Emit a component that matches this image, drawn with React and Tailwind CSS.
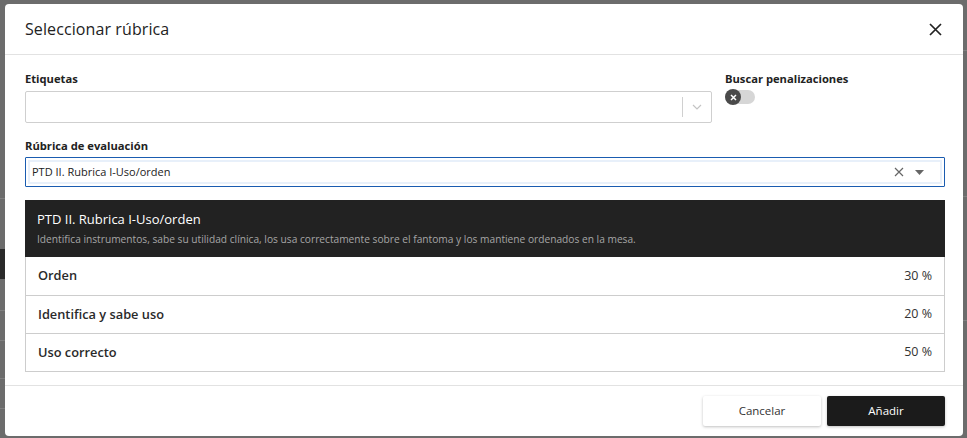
import React from "react";

export default function App() {
  const rows = [
    ["Orden", "30 %"],
    ["Identifica y sabe uso", "20 %"],
    ["Uso correcto", "50 %"],
  ];
  return (
    <div
      className="relative w-[967px] h-[438px] overflow-hidden bg-[#6c6c6c]"
      style={{ fontFamily: '"Open Sans", "Noto Sans", sans-serif' }}
    >
      {/* dimmed background fragments */}
      <div className="absolute left-0 top-[198px] w-[5px] h-px bg-[#808080]" />
      <div className="absolute left-0 top-[249px] w-[5px] h-[30px] bg-[#2a2a2a]" />
      <div className="absolute left-0 top-[310px] w-[5px] h-px bg-[#808080]" />
      <div className="absolute left-0 top-[340px] w-[5px] h-px bg-[#808080]" />
      <div className="absolute left-0 top-[378px] w-[5px] h-px bg-[#808080]" />
      <div className="absolute left-0 top-[408px] w-[5px] h-px bg-[#808080]" />
      <div className="absolute right-0 top-[50px] w-[4px] h-px bg-[#808080]" />
      <div className="absolute right-0 top-[196px] w-[4px] h-px bg-[#808080]" />
      <div className="absolute right-0 top-[320px] w-[4px] h-px bg-[#808080]" />

      <div className="absolute left-[5px] top-[4px] w-[958px] h-[432px] bg-white rounded-[4px] flex flex-col">
        {/* header */}
        <div className="h-[51px] flex items-center justify-between pl-[20px] pr-[20px] border-b border-[#e2e2e2]">
          <span className="text-[16px] text-[#222] tracking-[0.1px]">Seleccionar rúbrica</span>
          <svg width="13" height="13" viewBox="0 0 13 13" className="mr-[1px]">
            <path d="M1 1L12 12M12 1L1 12" stroke="#222" strokeWidth="1.7" />
          </svg>
        </div>

        {/* body */}
        <div className="pl-[20px] pr-[18px] pt-[16px] flex flex-col">
          <div className="flex gap-[13px]">
            <div className="w-[687px] flex flex-col">
              <label className="text-[11.2px] font-bold text-[#222] leading-[16px] mb-[4px]">Etiquetas</label>
              <div className="h-[32px] border border-[#cfcfcf] rounded-[2px] flex items-center justify-end">
                <div className="w-px h-[20px] bg-[#d0d0d0]" />
                <div className="w-[28px] flex justify-center">
                  <svg width="10" height="6" viewBox="0 0 10 6">
                    <path d="M1 1L5 5L9 1" stroke="#c4c4c4" strokeWidth="1.2" fill="none" />
                  </svg>
                </div>
              </div>
            </div>
            <div className="flex flex-col">
              <label className="text-[11.2px] font-bold text-[#222] leading-[16px] mb-[3px]">Buscar penalizaciones</label>
              <div className="relative w-[30px] h-[14px] rounded-full bg-[#d6d6d6]">
                <div className="absolute left-0 top-[-1px] w-[16px] h-[16px] rounded-full bg-[#4a4a4a] flex items-center justify-center">
                  <svg width="7" height="7" viewBox="0 0 7 7">
                    <path d="M1 1L6 6M6 1L1 6" stroke="#fff" strokeWidth="1.5" />
                  </svg>
                </div>
              </div>
            </div>
          </div>

          <label className="text-[11.2px] font-bold text-[#222] leading-[16px] mt-[15px] mb-[3px]">Rúbrica de evaluación</label>
          <div className="h-[30px] border border-[#1a5cb0] rounded-[1px] p-[2px]">
            <div className="h-full bg-[#e8f0fa] px-[2px] flex items-center">
              <div className="h-[20px] flex-1 bg-white flex items-center pl-[2px]">
                <span className="text-[11px] text-[#222]">PTD II. Rubrica I-Uso/orden</span>
                <div className="flex-1" />
              </div>
              <div className="h-[20px] bg-white flex items-center pr-[16px] gap-[11px]">
                <svg width="10" height="10" viewBox="0 0 10 10">
                  <path d="M1 1L9 9M9 1L1 9" stroke="#666" strokeWidth="1.2" />
                </svg>
                <svg width="9" height="5" viewBox="0 0 9 5">
                  <path d="M0 0H9L4.5 5Z" fill="#666" />
                </svg>
              </div>
            </div>
          </div>

          <div className="mt-[13px] bg-[#222222] h-[57px] px-[12px] flex flex-col justify-center">
            <div className="text-[13px] text-white leading-[19px]">PTD II. Rubrica I-Uso/orden</div>
            <div className="text-[10.2px] text-[#a6a6a6] leading-[15px] mt-[3px]">
              Identifica instrumentos, sabe su utilidad clínica, los usa correctamente sobre el fantoma y los mantiene ordenados en la mesa.
            </div>
          </div>
          <div className="border border-t-0 border-[#cdcdcd]">
            {rows.map(([name, pct], i) => (
              <div
                key={name}
                className={`h-[38px] flex items-center justify-between pl-[12px] pr-[12px] ${i > 0 ? "border-t border-[#cdcdcd]" : ""}`}
              >
                <span className="text-[12.8px] font-semibold text-[#2a2a2a]">{name}</span>
                <span className="text-[12.5px] text-[#333]">{pct}</span>
              </div>
            ))}
          </div>
        </div>

        {/* footer */}
        <div className="mt-[13px] border-t border-[#e2e2e2] flex-1 flex items-center justify-end gap-[6px] pr-[18px]">
          <button className="w-[118px] h-[30px] bg-white rounded-[2px] shadow-[0_1px_3px_rgba(0,0,0,0.25)] text-[11.5px] text-[#333]">
            Cancelar
          </button>
          <button className="w-[118px] h-[30px] bg-[#1b1b1b] rounded-[2px] shadow-[0_1px_3px_rgba(0,0,0,0.25)] text-[11.5px] text-white">
            Añadir
          </button>
        </div>
      </div>
    </div>
  );
}
